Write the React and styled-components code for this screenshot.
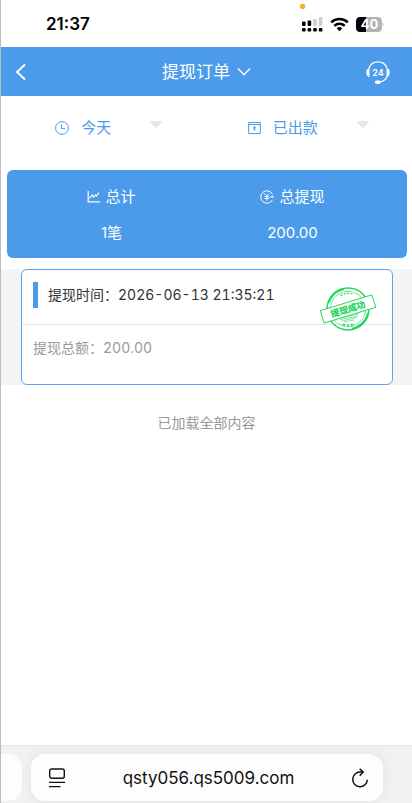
import React from 'react';
import styled, { createGlobalStyle } from 'styled-components';

const GlobalStyle = createGlobalStyle`
  * {
    box-sizing: border-box;
  }

  body {
    margin: 0;
    background: #fff;
    font-family: Inter, 'Noto Sans CJK SC', sans-serif;
    font-size: 14px;
    line-height: 20px;
  }

  button,
  select {
    margin: 0;
    padding: 0;
    border: 0;
    background: none;
    color: inherit;
    font: inherit;
    cursor: pointer;
  }

  svg {
    display: block;
    flex: none;
  }
`;

const filters = [
  { id: 'date', label: '日期', value: '今天', icon: <ClockIcon /> },
  { id: 'status', label: '状态', value: '已出款', icon: <BoxIcon /> },
];

const totals = [
  { label: '总计', value: '1笔', icon: <ChartIcon /> },
  { label: '总提现', value: '200.00', icon: <YuanIcon /> },
];

const orders = [{ time: '2026-06-13 21:35:21', amount: '200.00' }];

export default function App() {
  return (
    <Page>
      <GlobalStyle />
      <StatusBar>
        <time>21:37</time>
        <StatusIcons />
      </StatusBar>
      <NavBar>
        <NavButton aria-label="返回">
          <svg width="12" height="18" viewBox="0 0 12 18" fill="none">
            <path d="M10 1.5 2 9l8 7.5" stroke="#fff" strokeWidth="1.8" />
          </svg>
        </NavButton>
        <TitleButton>
          提现订单
          <svg width="14" height="10" viewBox="0 0 14 10" fill="none">
            <path d="m1 1.5 6 6.3 6-6.3" stroke="#fff" strokeWidth="1.4" />
          </svg>
        </TitleButton>
        <NavButton aria-label="客服" $end>
          <SupportIcon />
        </NavButton>
      </NavBar>
      <Main>
        <Filters>
          {filters.map((item) => (
            <Filter key={item.id} htmlFor={item.id}>
              {item.icon}
              <select id={item.id} aria-label={item.label}>
                <option>{item.value}</option>
              </select>
              <Caret width="12" height="7" viewBox="0 0 12 7">
                <path d="M1 0h10q1.4.3.5 1.4L7 6.4q-1 .9-2 0L.5 1.4Q-.4.3 1 0Z" />
              </Caret>
            </Filter>
          ))}
        </Filters>
        <Summary>
          {totals.map((item) => (
            <Total key={item.label}>
              <dt>
                {item.icon}
                {item.label}
              </dt>
              <dd>{item.value}</dd>
            </Total>
          ))}
        </Summary>
        <Orders>
          {orders.map((order) => (
            <Order key={order.time}>
              <OrderTime>提现时间：{order.time}</OrderTime>
              <OrderAmount>提现总额：{order.amount}</OrderAmount>
              <Stamp />
            </Order>
          ))}
        </Orders>
        <EndNote>已加载全部内容</EndNote>
      </Main>
      <BrowserBar>
        <PreviousTab />
        <AddressBar>
          <button aria-label="页面菜单">
            <svg width="18" height="20" viewBox="0 0 18 20" fill="none" stroke="#111" strokeWidth="1.4">
              <rect x="1.7" y="1" width="14.6" height="9.3" rx="2" />
              <path d="M1 14.4h16M1 18.6h11.5" />
            </svg>
          </button>
          <span>qsty056.qs5009.com</span>
          <button aria-label="刷新">
            <svg width="18" height="20" viewBox="0 0 18 20" fill="none" stroke="#111" strokeWidth="1.5">
              <path d="M11.8 4.1H9a7.3 7.3 0 1 0 7.3 7.6" />
              <path d="m8.7.7 3.5 3.4-3.5 3.6" />
            </svg>
          </button>
        </AddressBar>
      </BrowserBar>
    </Page>
  );
}

function StatusIcons() {
  return (
    <svg width="84" height="32" viewBox="0 0 84 32">
      <circle cx="2.6" cy="3.4" r="2.6" fill="#ffa832" />
      <g fill="#000">
        <rect x="2" y="18.5" width="3.6" height="4.5" rx="1.2" />
        <rect x="7.6" y="17.5" width="3.6" height="5.5" rx="1.2" />
        <rect x="2" y="25" width="3.6" height="3.6" rx="1.2" />
        <rect x="7.6" y="25" width="3.6" height="3.6" rx="1.2" />
        <rect x="13.2" y="25" width="3.6" height="3.6" rx="1.2" />
        <rect x="18.8" y="25" width="3.6" height="3.6" rx="1.2" />
      </g>
      <g fill="#cfcfcf">
        <rect x="13.2" y="16" width="3.6" height="7" rx="1" />
        <rect x="18.8" y="14" width="3.6" height="9" rx="1" />
      </g>
      <g fill="none" stroke="#000" strokeWidth="2.5">
        <path d="M31.2 19.3a12 12 0 0 1 16.6 0" />
        <path d="M34.3 22.9a7.5 7.5 0 0 1 10.4 0" />
      </g>
      <path d="M36.7 25.3a4 4 0 0 1 5.6 0l-2.8 2.9Z" />
      <path d="M60 14h6v15h-6q-4-.2-4-4.3v-6.4q0-4.1 4-4.3Z" />
      <path d="M66 14h12q4 .2 4 4.3v6.4q0 4.1-4 4.3H66Z" fill="#b3b3b3" />
      <path d="M82.8 19.3q1.5 2.2 0 4.4Z" fill="#b3b3b3" />
      <text x="69.5" y="26.3" fill="#fff" fontSize="13" fontWeight="700" textAnchor="middle">
        40
      </text>
    </svg>
  );
}

function SupportIcon() {
  return (
    <svg width="26" height="26" viewBox="0 0 26 26" fill="none">
      <path d="M4 9a9.7 9.7 0 0 1 18 0M22.2 17.5q-2 4.8-8 5.7" stroke="#fff" strokeWidth="1.3" />
      <path d="M4.5 9v9Q1.3 17.7 1.3 13.5T4.5 9ZM21.5 9v9q3.2-.3 3.2-4.5T21.5 9Z" fill="#fff" />
      <ellipse cx="12.8" cy="23.2" rx="2.8" ry="1.9" fill="#fff" />
      <text x="13" y="16.5" fill="#fff" fontSize="9" fontWeight="600" textAnchor="middle">
        24
      </text>
    </svg>
  );
}

function ClockIcon() {
  return (
    <svg width="14" height="14" viewBox="0 0 14 14" fill="none" stroke="#4b9bea">
      <circle cx="7" cy="7" r="6.4" />
      <path d="M6.5 3.5v4H10" />
    </svg>
  );
}

function BoxIcon() {
  return (
    <svg width="13" height="14" viewBox="0 0 13 14" fill="none" stroke="#4b9bea">
      <path d="M.7 1.5h11.6v11H.7ZM.7 3.5h11.6" />
      <path d="M6.5 5.6v4M5.3 6.5h2.4" strokeWidth="1.5" />
    </svg>
  );
}

function ChartIcon() {
  return (
    <svg width="13" height="14" viewBox="0 0 13 14" fill="none" stroke="#fff" strokeWidth="1.2">
      <path d="M1.2 1v10.8H13" />
      <path d="m2.5 8.5 2.7-3.5 1.5 2 1.8-2 1 1L12 2.5" />
    </svg>
  );
}

function YuanIcon() {
  return (
    <svg width="14" height="14" viewBox="0 0 14 14" fill="none" stroke="#fff">
      <path d="M12.5 4.2A6.2 6.2 0 1 0 12.5 9.8M9.5 7h4.3M12 5.4 13.6 7" />
      <path d="m4.5 3.5 2.2 3 2.2-3M6.7 6.5v4M4.5 6.6H9M4.5 8.5H9" />
    </svg>
  );
}

function Stamp() {
  return (
    <StampArt width="56" height="46" viewBox="0 0 56 46" fill="none" stroke="#22d65c">
      <circle cx="28" cy="23" r="21" strokeWidth="1.4" />
      <circle cx="28" cy="23" r="17.6" strokeWidth=".7" strokeDasharray="9 .8" />
      <path d="M8.5 17A20.3 20.3 0 0 1 24 3M48 27A20.3 20.3 0 0 1 32 42.8" strokeWidth="2" />
      <path d="M20.5 9.5q7-3.8 13.5-1" strokeWidth="1.2" strokeDasharray="2 1.5" />
      <path d="M23 38.5q6 2.2 11-.7" strokeWidth="2" strokeDasharray="2 2" />
      <path
        d="M19.5 32 39 28M20.5 33.5 38 30M22 35l14.5-3.5M24.5 36l9.5-2"
        strokeWidth=".8"
        strokeDasharray="1.5 .5"
      />
      <g transform="rotate(-17 28 23)">
        <rect x="1" y="16.5" width="54" height="13" fill="#fff" strokeWidth=".9" />
        <text x="28" y="26.5" fill="#22d65c" stroke="none" fontSize="9" fontWeight="900" textAnchor="middle">
          提现成功
        </text>
      </g>
    </StampArt>
  );
}

const Page = styled.div`
  display: flex;
  flex-direction: column;
  min-height: 100vh;
  border-left: 1px solid #b9bdc4;
`;

const StatusBar = styled.div`
  display: flex;
  justify-content: space-between;
  align-items: flex-start;
  height: 47px;
  padding: 3px 28px 0 45px;
  color: #000;

  time {
    padding-top: 11px;
    font-size: 17px;
    font-weight: 600;
  }
`;

const NavBar = styled.header`
  display: grid;
  grid-template-columns: 1fr auto 1fr;
  align-items: center;
  height: 49px;
  padding: 0 14px;
  background: #4b9bea;
  color: #fff;
`;

const NavButton = styled.button`
  justify-self: ${(props) => (props.$end ? 'end' : 'start')};

  && {
    padding-right: ${(props) => (props.$end ? '7px' : '0')};
  }
`;

const TitleButton = styled.button`
  display: flex;
  align-items: center;
  gap: 7px;

  && {
    font-size: 17px;
  }
`;

const Main = styled.main`
  flex: 1;
`;

const Filters = styled.div`
  display: grid;
  grid-template-columns: 1fr 1fr;
  padding: 0 4px 0 8px;
`;

const Filter = styled.label`
  display: flex;
  justify-content: center;
  align-items: center;
  height: 64px;
  color: #4b9bea;

  select {
    appearance: none;
    margin: 0 38px 0 12px;
    font-size: 15px;
  }
`;

const Caret = styled.svg`
  margin-bottom: 8px;
  fill: #e6e6e6;
`;

const Summary = styled.dl`
  display: grid;
  grid-template-columns: 1fr 1fr;
  margin: 10px 5px 11px 6px;
  padding: 17px 24px 15px 14px;
  border-radius: 6px;
  background: #4b9bea;
  color: #fff;
  font-size: 15px;
`;

const Total = styled.div`
  display: grid;
  gap: 16px;
  justify-items: center;

  dt {
    display: flex;
    align-items: center;
    gap: 5px;
  }

  dd {
    margin: 0;
  }
`;

const Orders = styled.section`
  padding: 0 19px 0 20px;
  background: #f4f4f4;
`;

const Order = styled.article`
  position: relative;
  border: 1px solid #5aa4ee;
  border-radius: 6px;
  background: #fff;
  font-variant-numeric: tabular-nums;
`;

const OrderTime = styled.div`
  display: flex;
  align-items: center;
  height: 55px;
  padding: 0 11px 4px;
  border-bottom: 1px solid #e6e6e6;
  color: #333;

  &::before {
    content: '';
    width: 5px;
    height: 26px;
    margin-right: 10px;
    background: #4b9bea;
  }
`;

const OrderAmount = styled.div`
  padding: 13px 11px 26px;
  color: #999;
`;

const StampArt = styled.svg`
  position: absolute;
  top: 16px;
  right: 16px;
`;

const EndNote = styled.p`
  margin: 28px 0;
  color: #999;
  text-align: center;
`;

const BrowserBar = styled.footer`
  display: flex;
  gap: 9px;
  padding: 8px 29px 2px 0;
  border-top: 1px solid #e4e4e4;
  background: #f1f1f1;
`;

const PreviousTab = styled.div`
  width: 21px;
  border-radius: 0 14px 14px 0;
  background: #fdfdfd;
`;

const AddressBar = styled.div`
  display: flex;
  flex: 1;
  justify-content: space-between;
  align-items: center;
  height: 47px;
  padding: 0 14px 0 17px;
  border-radius: 14px;
  background: #fdfdfd;
  box-shadow: 0 0 12px rgba(0, 0, 0, 0.07);
  color: #111;
  font-size: 17px;
`;
